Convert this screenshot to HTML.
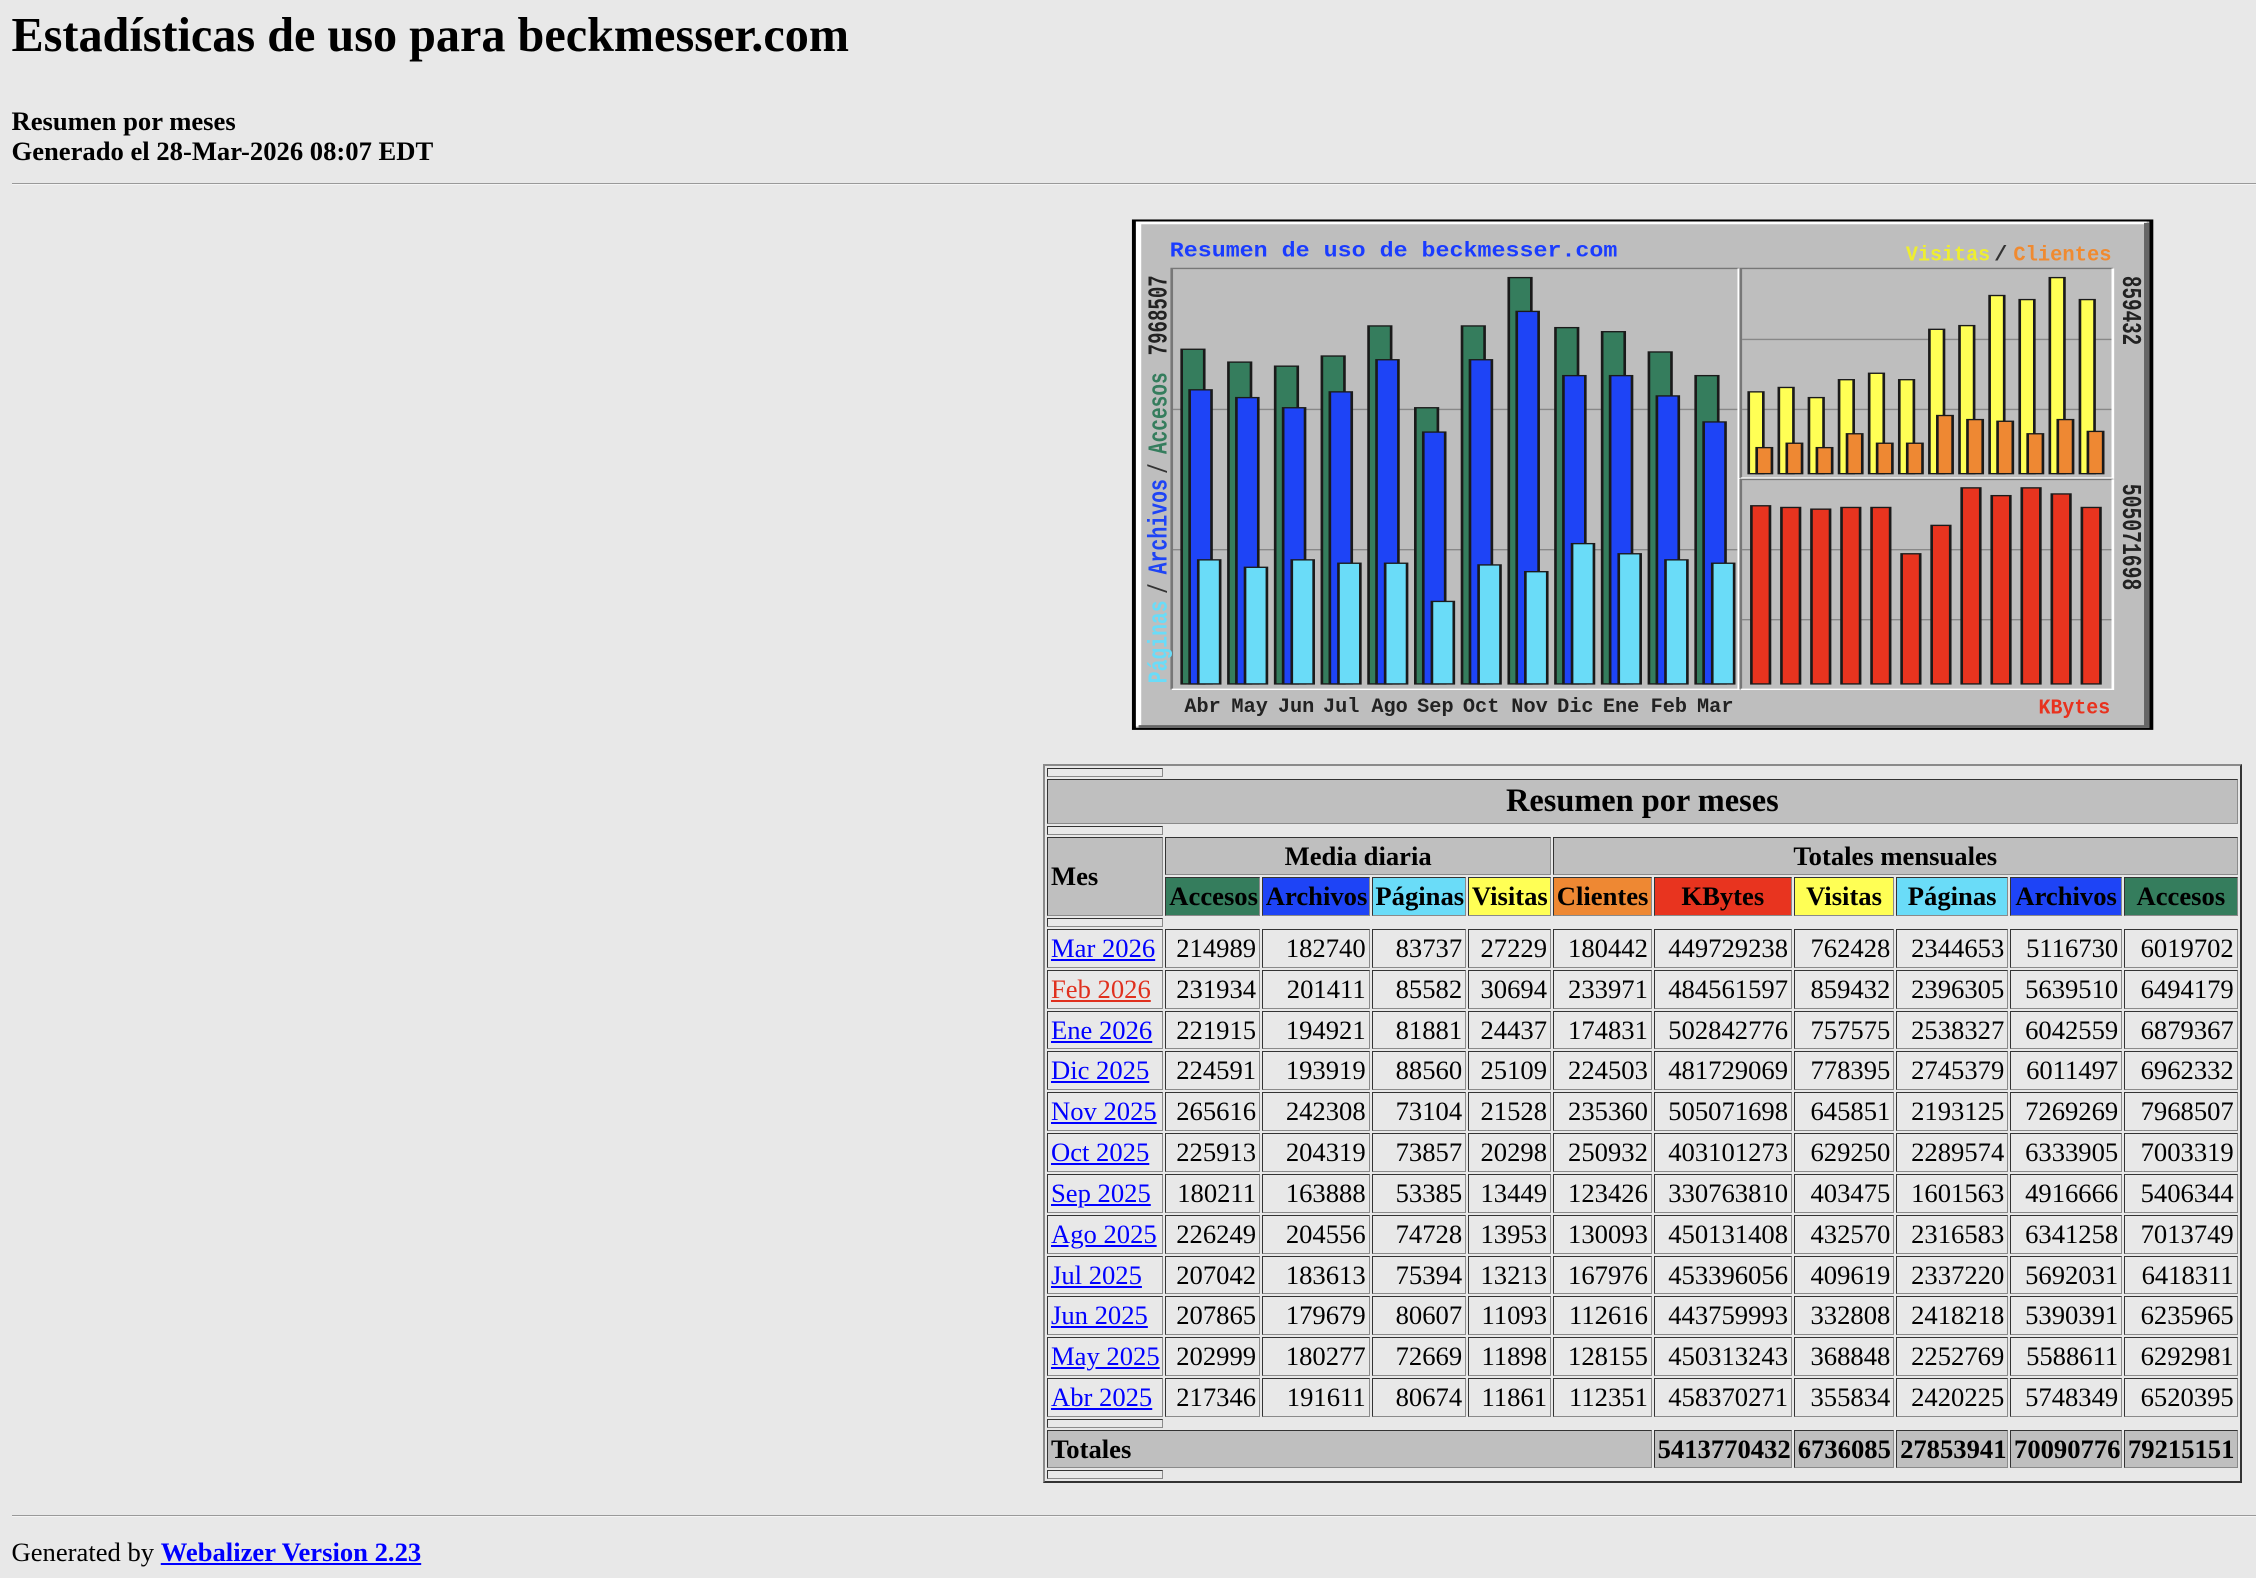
<!DOCTYPE html>
<html><head><meta charset="utf-8">
<style>
html,body{margin:0;padding:0;background:#e8e8e8;}
body{zoom:1.43878;width:1568px;height:1097px;position:relative;overflow:hidden;font-family:"Liberation Serif",serif;color:#000;}
.abs{position:absolute;}
h1{position:absolute;left:8px;top:6px;margin:0;font-size:33.5px;line-height:38px;font-weight:bold;white-space:nowrap;}
.b18{font-size:18.5px;line-height:21px;font-weight:bold;white-space:nowrap;}
.hr{position:absolute;left:8px;width:1560px;height:0;border-top:1px solid #999;border-bottom:1px solid #f4f4f4;}
table.t{position:absolute;left:725px;top:531px;border-collapse:separate;border-spacing:2px 1.9px;table-layout:fixed;width:833px;border:2px solid;border-color:#8a8a8a #333 #333 #8a8a8a;font-size:18.5px;}
table.t td,table.t th{box-sizing:border-box;border:1px solid;border-color:#333 #8a8a8a #8a8a8a #333;padding:0 2px;height:27px;line-height:20px;white-space:nowrap;overflow:hidden;}
table.t td{text-align:right;background:#e8e8e8;}
table.t th{background:#bfbfbf;}
table.t tr.sp th{height:6px;padding:0;background:#e8e8e8;}
table.t th.title{height:31.5px;font-size:22.5px;}
table.t td.m{text-align:left;}
a{color:#0000ff;}
a.r{color:#e0301e;}
.g{background:#357d5d!important}.bl{background:#1e44f6!important}.c{background:#6adcf8!important}.y{background:#ffff55!important}.o{background:#ee8833!important}.rd{background:#e8341f!important}
</style></head><body>
<h1>Estadísticas de uso para beckmesser.com</h1>
<div class="abs b18" style="left:8px;top:73.5px">Resumen por meses</div>
<div class="abs b18" style="left:8px;top:94.5px">Generado el 28-Mar-2026 08:07 EDT</div>
<div class="hr" style="top:127px"></div>

<svg class="abs" style="left:778.4px;top:145.95px;width:722.8px;height:368.4px" viewBox="0 0 1568 1568" preserveAspectRatio="none" xmlns="http://www.w3.org/2000/svg">
<rect x="18" y="28" width="1540" height="1510" fill="#000"/>
<rect x="24" y="34" width="1528" height="1498" fill="#bebebe"/>
<path d="M28 1528 V38 H1548" stroke="#fff" stroke-width="8" fill="none"/>
<path d="M28 1528 H1548 V38" stroke="#666" stroke-width="8" fill="none"/>
<rect x="78" y="173" width="855" height="1245" fill="#bebebe"/>
<rect x="936" y="173" width="561" height="620" fill="#bebebe"/>
<rect x="936" y="797" width="561" height="621" fill="#bebebe"/>
<g stroke="#888" stroke-width="4">
<line x1="80" y1="590" x2="931" y2="590"/><line x1="80" y1="1005" x2="931" y2="1005"/>
<line x1="938" y1="383" x2="1495" y2="383"/><line x1="938" y1="590" x2="1495" y2="590"/>
<line x1="938" y1="1005" x2="1495" y2="1005"/><line x1="938" y1="1212" x2="1495" y2="1212"/>
</g>
<g fill="none" stroke-width="4">
<path d="M78 1418 V173 H933" stroke="#777"/><path d="M78 1418 H933 V173" stroke="#fff"/>
<path d="M936 793 V173 H1497" stroke="#777"/><path d="M936 793 H1497 V173" stroke="#fff"/>
<path d="M936 1418 V797 H1497" stroke="#777"/><path d="M936 1418 H1497 V797" stroke="#fff"/>
</g>
<g stroke="#1a1a1a" stroke-width="4">
<g fill="#357d5d">
<rect x="93" y="412" width="34" height="990"/><rect x="163.5" y="450" width="34" height="952"/><rect x="234" y="462" width="34" height="940"/><rect x="304.4" y="432" width="34" height="970"/><rect x="374.8" y="343" width="34" height="1059"/><rect x="445.3" y="585" width="34" height="817"/><rect x="515.7" y="343" width="34" height="1059"/><rect x="586.2" y="200" width="34" height="1202"/><rect x="656.6" y="348" width="34" height="1054"/><rect x="727" y="360" width="34" height="1042"/><rect x="797.5" y="420" width="34" height="982"/><rect x="868" y="490" width="34" height="912"/>
</g>
<g fill="#1e44f6">
<rect x="105" y="532" width="33" height="870"/><rect x="175.5" y="555" width="33" height="847"/><rect x="246" y="585" width="33" height="817"/><rect x="316.4" y="538" width="33" height="864"/><rect x="386.8" y="443" width="33" height="959"/><rect x="457.3" y="657" width="33" height="745"/><rect x="527.7" y="443" width="33" height="959"/><rect x="598.2" y="300" width="33" height="1102"/><rect x="668.6" y="490" width="33" height="912"/><rect x="739" y="490" width="33" height="912"/><rect x="809.5" y="550" width="33" height="852"/><rect x="880" y="627" width="33" height="775"/>
</g>
<g fill="#6adcf8">
<rect x="118" y="1035" width="33" height="367"/><rect x="188.5" y="1057" width="33" height="345"/><rect x="259" y="1035" width="33" height="367"/><rect x="329.4" y="1045" width="33" height="357"/><rect x="399.8" y="1045" width="33" height="357"/><rect x="470.3" y="1158" width="33" height="244"/><rect x="540.7" y="1050" width="33" height="352"/><rect x="611.2" y="1070" width="33" height="332"/><rect x="681.6" y="987" width="33" height="415"/><rect x="752" y="1017" width="33" height="385"/><rect x="822.5" y="1035" width="33" height="367"/><rect x="893" y="1045" width="33" height="357"/>
</g>
<g fill="#ffff55">
<rect x="948" y="538" width="22" height="242"/><rect x="993.4" y="525" width="22" height="255"/><rect x="1038.8" y="555" width="22" height="225"/><rect x="1084.2" y="502" width="22" height="278"/><rect x="1129.6" y="483" width="22" height="297"/><rect x="1175" y="502" width="22" height="278"/><rect x="1220.4" y="353" width="22" height="427"/><rect x="1265.8" y="342" width="22" height="438"/><rect x="1311.2" y="253" width="22" height="527"/><rect x="1356.6" y="265" width="22" height="515"/><rect x="1402" y="200" width="22" height="580"/><rect x="1447.4" y="265" width="22" height="515"/>
</g>
<g fill="#ee8833">
<rect x="960" y="703" width="23" height="77"/><rect x="1005.4" y="690" width="23" height="90"/><rect x="1050.8" y="703" width="23" height="77"/><rect x="1096.2" y="662" width="23" height="118"/><rect x="1141.6" y="690" width="23" height="90"/><rect x="1187" y="690" width="23" height="90"/><rect x="1232.4" y="608" width="23" height="172"/><rect x="1277.8" y="620" width="23" height="160"/><rect x="1323.2" y="625" width="23" height="155"/><rect x="1368.6" y="662" width="23" height="118"/><rect x="1414" y="620" width="23" height="160"/><rect x="1459.4" y="655" width="23" height="125"/>
</g>
<g fill="#e8341f">
<rect x="952" y="875" width="28" height="527"/><rect x="997.3" y="880" width="28" height="522"/><rect x="1042.6" y="885" width="28" height="517"/><rect x="1087.9" y="880" width="28" height="522"/><rect x="1133.2" y="880" width="28" height="522"/><rect x="1178.5" y="1017" width="28" height="385"/><rect x="1223.8" y="933" width="28" height="469"/><rect x="1269.1" y="822" width="28" height="580"/><rect x="1314.4" y="845" width="28" height="557"/><rect x="1359.7" y="822" width="28" height="580"/><rect x="1405" y="840" width="28" height="562"/><rect x="1450.3" y="880" width="28" height="522"/>
</g>
</g>
<g font-family="'Liberation Mono','DejaVu Sans Mono',monospace" font-weight="bold">
<text x="75" y="138" font-size="62" fill="#1a3cff" textLength="675" lengthAdjust="spacingAndGlyphs">Resumen de uso de beckmesser.com</text>
<text x="1185" y="150" font-size="62" fill="#eeee30" textLength="127" lengthAdjust="spacingAndGlyphs">Visitas</text>
<text x="1318" y="150" font-size="62" fill="#333" textLength="20" lengthAdjust="spacingAndGlyphs">/</text>
<text x="1347" y="150" font-size="62" fill="#f08a30" textLength="148" lengthAdjust="spacingAndGlyphs">Clientes</text>
<g font-size="60" fill="#222">
<text x="97" y="1485" textLength="55" lengthAdjust="spacingAndGlyphs">Abr</text>
<text x="168" y="1485" textLength="55" lengthAdjust="spacingAndGlyphs">May</text>
<text x="238" y="1485" textLength="55" lengthAdjust="spacingAndGlyphs">Jun</text>
<text x="306" y="1485" textLength="55" lengthAdjust="spacingAndGlyphs">Jul</text>
<text x="379" y="1485" textLength="55" lengthAdjust="spacingAndGlyphs">Ago</text>
<text x="448" y="1485" textLength="55" lengthAdjust="spacingAndGlyphs">Sep</text>
<text x="517" y="1485" textLength="55" lengthAdjust="spacingAndGlyphs">Oct</text>
<text x="590" y="1485" textLength="55" lengthAdjust="spacingAndGlyphs">Nov</text>
<text x="659" y="1485" textLength="55" lengthAdjust="spacingAndGlyphs">Dic</text>
<text x="728" y="1485" textLength="55" lengthAdjust="spacingAndGlyphs">Ene</text>
<text x="800" y="1485" textLength="55" lengthAdjust="spacingAndGlyphs">Feb</text>
<text x="870" y="1485" textLength="55" lengthAdjust="spacingAndGlyphs">Mar</text>
</g>
<text x="1385" y="1490" font-size="62" fill="#e8321e" textLength="108" lengthAdjust="spacingAndGlyphs">KBytes</text>
<g font-size="40">
<text transform="translate(70,1400) rotate(-90)" fill="#6adcf8" textLength="245" lengthAdjust="spacingAndGlyphs">Páginas</text>
<text transform="translate(70,1135) rotate(-90)" fill="#333" textLength="30" lengthAdjust="spacingAndGlyphs">/</text>
<text transform="translate(70,1078) rotate(-90)" fill="#1e44f6" textLength="282" lengthAdjust="spacingAndGlyphs">Archivos</text>
<text transform="translate(70,780) rotate(-90)" fill="#333" textLength="30" lengthAdjust="spacingAndGlyphs">/</text>
<text transform="translate(70,722) rotate(-90)" fill="#357d5d" textLength="242" lengthAdjust="spacingAndGlyphs">Accesos</text>
<text transform="translate(70,430) rotate(-90)" fill="#222" textLength="237" lengthAdjust="spacingAndGlyphs">7968507</text>
<text transform="translate(1512,195) rotate(90)" fill="#222" textLength="205" lengthAdjust="spacingAndGlyphs">859432</text>
<text transform="translate(1512,810) rotate(90)" fill="#222" textLength="315" lengthAdjust="spacingAndGlyphs">505071698</text>
</g>
</g>
</svg>

<table class="t">
<colgroup><col style="width:80px"><col style="width:65px"><col style="width:74px"><col style="width:65px"><col style="width:57px"><col style="width:68px"><col style="width:95px"><col style="width:69px"><col style="width:77px"><col style="width:77px"><col style="width:78px"></colgroup>
<tr class="sp"><th></th></tr>
<tr><th colspan="11" class="title">Resumen por meses</th></tr>
<tr class="sp"><th></th></tr>
<tr><th rowspan="2" style="text-align:left">Mes</th><th colspan="4">Media diaria</th><th colspan="6">Totales mensuales</th></tr>
<tr><th class="g">Accesos</th><th class="bl">Archivos</th><th class="c">Páginas</th><th class="y">Visitas</th><th class="o">Clientes</th><th class="rd">KBytes</th><th class="y">Visitas</th><th class="c">Páginas</th><th class="bl">Archivos</th><th class="g">Accesos</th></tr>
<tr class="sp"><th></th></tr>
<tr><td class="m"><a href="#">Mar 2026</a></td><td>214989</td><td>182740</td><td>83737</td><td>27229</td><td>180442</td><td>449729238</td><td>762428</td><td>2344653</td><td>5116730</td><td>6019702</td></tr>
<tr><td class="m"><a class="r" href="#">Feb 2026</a></td><td>231934</td><td>201411</td><td>85582</td><td>30694</td><td>233971</td><td>484561597</td><td>859432</td><td>2396305</td><td>5639510</td><td>6494179</td></tr>
<tr><td class="m"><a href="#">Ene 2026</a></td><td>221915</td><td>194921</td><td>81881</td><td>24437</td><td>174831</td><td>502842776</td><td>757575</td><td>2538327</td><td>6042559</td><td>6879367</td></tr>
<tr><td class="m"><a href="#">Dic 2025</a></td><td>224591</td><td>193919</td><td>88560</td><td>25109</td><td>224503</td><td>481729069</td><td>778395</td><td>2745379</td><td>6011497</td><td>6962332</td></tr>
<tr><td class="m"><a href="#">Nov 2025</a></td><td>265616</td><td>242308</td><td>73104</td><td>21528</td><td>235360</td><td>505071698</td><td>645851</td><td>2193125</td><td>7269269</td><td>7968507</td></tr>
<tr><td class="m"><a href="#">Oct 2025</a></td><td>225913</td><td>204319</td><td>73857</td><td>20298</td><td>250932</td><td>403101273</td><td>629250</td><td>2289574</td><td>6333905</td><td>7003319</td></tr>
<tr><td class="m"><a href="#">Sep 2025</a></td><td>180211</td><td>163888</td><td>53385</td><td>13449</td><td>123426</td><td>330763810</td><td>403475</td><td>1601563</td><td>4916666</td><td>5406344</td></tr>
<tr><td class="m"><a href="#">Ago 2025</a></td><td>226249</td><td>204556</td><td>74728</td><td>13953</td><td>130093</td><td>450131408</td><td>432570</td><td>2316583</td><td>6341258</td><td>7013749</td></tr>
<tr><td class="m"><a href="#">Jul 2025</a></td><td>207042</td><td>183613</td><td>75394</td><td>13213</td><td>167976</td><td>453396056</td><td>409619</td><td>2337220</td><td>5692031</td><td>6418311</td></tr>
<tr><td class="m"><a href="#">Jun 2025</a></td><td>207865</td><td>179679</td><td>80607</td><td>11093</td><td>112616</td><td>443759993</td><td>332808</td><td>2418218</td><td>5390391</td><td>6235965</td></tr>
<tr><td class="m"><a href="#">May 2025</a></td><td>202999</td><td>180277</td><td>72669</td><td>11898</td><td>128155</td><td>450313243</td><td>368848</td><td>2252769</td><td>5588611</td><td>6292981</td></tr>
<tr><td class="m"><a href="#">Abr 2025</a></td><td>217346</td><td>191611</td><td>80674</td><td>11861</td><td>112351</td><td>458370271</td><td>355834</td><td>2420225</td><td>5748349</td><td>6520395</td></tr>
<tr class="sp"><th></th></tr>
<tr><th colspan="6" style="text-align:left">Totales</th><th style="text-align:right">5413770432</th><th style="text-align:right">6736085</th><th style="text-align:right">27853941</th><th style="text-align:right">70090776</th><th style="text-align:right">79215151</th></tr>
<tr class="sp"><th></th></tr>
</table>

<div class="hr" style="top:1053px"></div>
<div class="abs" style="left:8px;top:1068px;font-size:18.5px;line-height:21px;white-space:nowrap">Generated by <a href="#"><b>Webalizer Version 2.23</b></a></div>
</body></html>
